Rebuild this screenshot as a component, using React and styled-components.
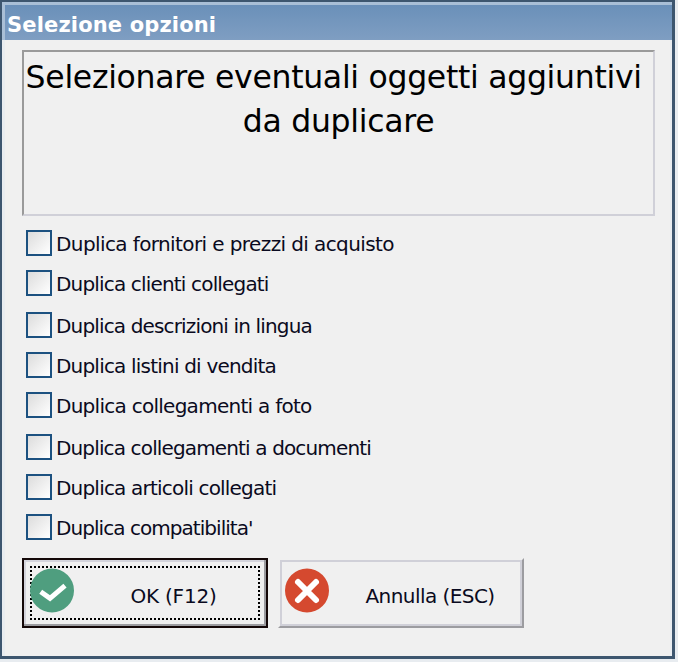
import styled, { createGlobalStyle } from "styled-components";

const GlobalStyle = createGlobalStyle`
    html, body {
        margin: 0;
        padding: 0;
        background: #f0f0f0;
    }
`;

const Frame = styled.div`
    box-sizing: border-box;
    width: 678px;
    height: 662px;
    background: #e8ecf0;
    padding: 0 3px 3px 0;
    font-family: "DejaVu Sans", sans-serif;
    color: #0a0a20;
`;

const Window = styled.div`
    box-sizing: border-box;
    width: 675px;
    height: 659px;
    border: solid #3d566f;
    border-width: 2px 3px 3px 2px;
    background: #f0f0f0;
    display: flex;
    flex-direction: column;
`;

const TitleBar = styled.div`
    box-sizing: border-box;
    height: 38px;
    flex: none;
    border-top: 3px solid #a9bfd6;
    border-left: 3px solid #a9bfd6;
    background: linear-gradient(#6a90b9, #7f9ec2);
    color: #fff;
    font-weight: 700;
    font-size: 21px;
    line-height: 35px;
    padding: 3px 0 0 2px;
    letter-spacing: 0.15px;
`;

const Body = styled.div`
    flex: 1;
    display: flex;
    flex-direction: column;
    border: solid #e8ecf0;
    border-width: 0 2px 0 3px;
    padding: 10px 15px 0 17px;
`;

const Message = styled.div`
    box-sizing: border-box;
    height: 166px;
    flex: none;
    border: 2px solid;
    border-color: #9a9a9a #d0d0d8 #d0d0d8 #9a9a9a;
    padding-top: 3px;
    text-align: center;
    white-space: pre;
    font-size: 31.5px;
    line-height: 44px;
    letter-spacing: -0.3px;
    color: #000;
`;

const Options = styled.div`
    display: flex;
    flex-direction: column;
    padding: 14px 0 0 4px;
`;

const Option = styled.label`
    display: flex;
    align-items: center;
    height: 26px;
    gap: 4px;
    margin-bottom: ${(props) => (props.$wide ? 16 : 14)}px;
    font-size: 20px;
    letter-spacing: ${(props) => props.$tracking}px;
    &:last-child {
        margin-bottom: 0;
    }
`;

const OptionText = styled.span`
    padding-top: 2px;
`;

const Box = styled.span`
    box-sizing: border-box;
    width: 26px;
    height: 26px;
    flex: none;
    border: 2px solid #1c5180;
    background: linear-gradient(135deg, #dcdcdc, #ffffff);
`;

const Buttons = styled.div`
    display: flex;
    gap: 10px;
    margin-top: 18px;
`;

const Button = styled.div`
    box-sizing: border-box;
    position: relative;
    width: 246px;
    height: 70px;
    display: flex;
    align-items: center;
    justify-content: center;
    padding: 5px 0 0 ${(props) => props.$textInset}px;
    font-size: 20px;
    letter-spacing: ${(props) => props.$tracking}px;
    background: #f0f0f0;
    border: 2px solid;
    border-color: ${(props) =>
        props.$primary
            ? "#140808"
            : "#f0f0f0 #9c9ca0 #9c9ca0 #f0f0f0"};
    box-shadow: ${(props) =>
        props.$primary
            ? "inset -2px -2px 0 #9c9ca0, inset 2px 2px 0 #d4d4dc"
            : "inset 0 0 0 2px #d0d0d8"};
`;

const FocusRing = styled.span`
    position: absolute;
    inset: 6px;
    border: 2px dotted #000;
`;

const ButtonIcon = styled.svg`
    position: absolute;
    left: ${(props) => props.$left}px;
    top: 8px;
    width: 44px;
    height: 45px;
`;

const options = [
    { text: "Duplica fornitori e prezzi di acquisto", tracking: -0.6 },
    { text: "Duplica clienti collegati", tracking: -0.83, wide: true },
    { text: "Duplica descrizioni in lingua", tracking: -0.85 },
    { text: "Duplica listini di vendita", tracking: -0.8 },
    { text: "Duplica collegamenti a foto", tracking: -0.73, wide: true },
    { text: "Duplica collegamenti a documenti", tracking: -0.86 },
    { text: "Duplica articoli collegati", tracking: -0.8 },
    { text: "Duplica compatibilita'", tracking: -0.95 },
];

export default function App() {
    return (
        <Frame>
            <GlobalStyle />
            <Window>
                <TitleBar>Selezione opzioni</TitleBar>
                <Body>
                    <Message>
                        {"Selezionare eventuali oggetti aggiuntivi "}
                        <br />
                        da duplicare
                    </Message>
                    <Options>
                        {options.map((option) => (
                            <Option
                                key={option.text}
                                $tracking={option.tracking}
                                $wide={option.wide}
                            >
                                <Box />
                                <OptionText>{option.text}</OptionText>
                            </Option>
                        ))}
                    </Options>
                    <Buttons>
                        <Button $primary $textInset={57} $tracking={-0.2}>
                            <FocusRing />
                            <ButtonIcon $left={6} viewBox="0 0 44 45">
                                <circle cx="22" cy="22.5" r="22" fill="#4f9e7f" />
                                <path
                                    d="M10.7 23.7 L20 30.3 L35 17.7"
                                    fill="none"
                                    stroke="#fff"
                                    strokeWidth="5"
                                />
                            </ButtonIcon>
                            OK (F12)
                        </Button>
                        <Button $textInset={58} $tracking={-0.55}>
                            <ButtonIcon $left={5} viewBox="0 0 44 45">
                                <circle cx="22" cy="22.5" r="22" fill="#d5492f" />
                                <path
                                    d="M13 14 L31 32 M31 14 L13 32"
                                    fill="none"
                                    stroke="#fff"
                                    strokeWidth="6"
                                    strokeLinecap="round"
                                />
                            </ButtonIcon>
                            Annulla (ESC)
                        </Button>
                    </Buttons>
                </Body>
            </Window>
        </Frame>
    );
}
